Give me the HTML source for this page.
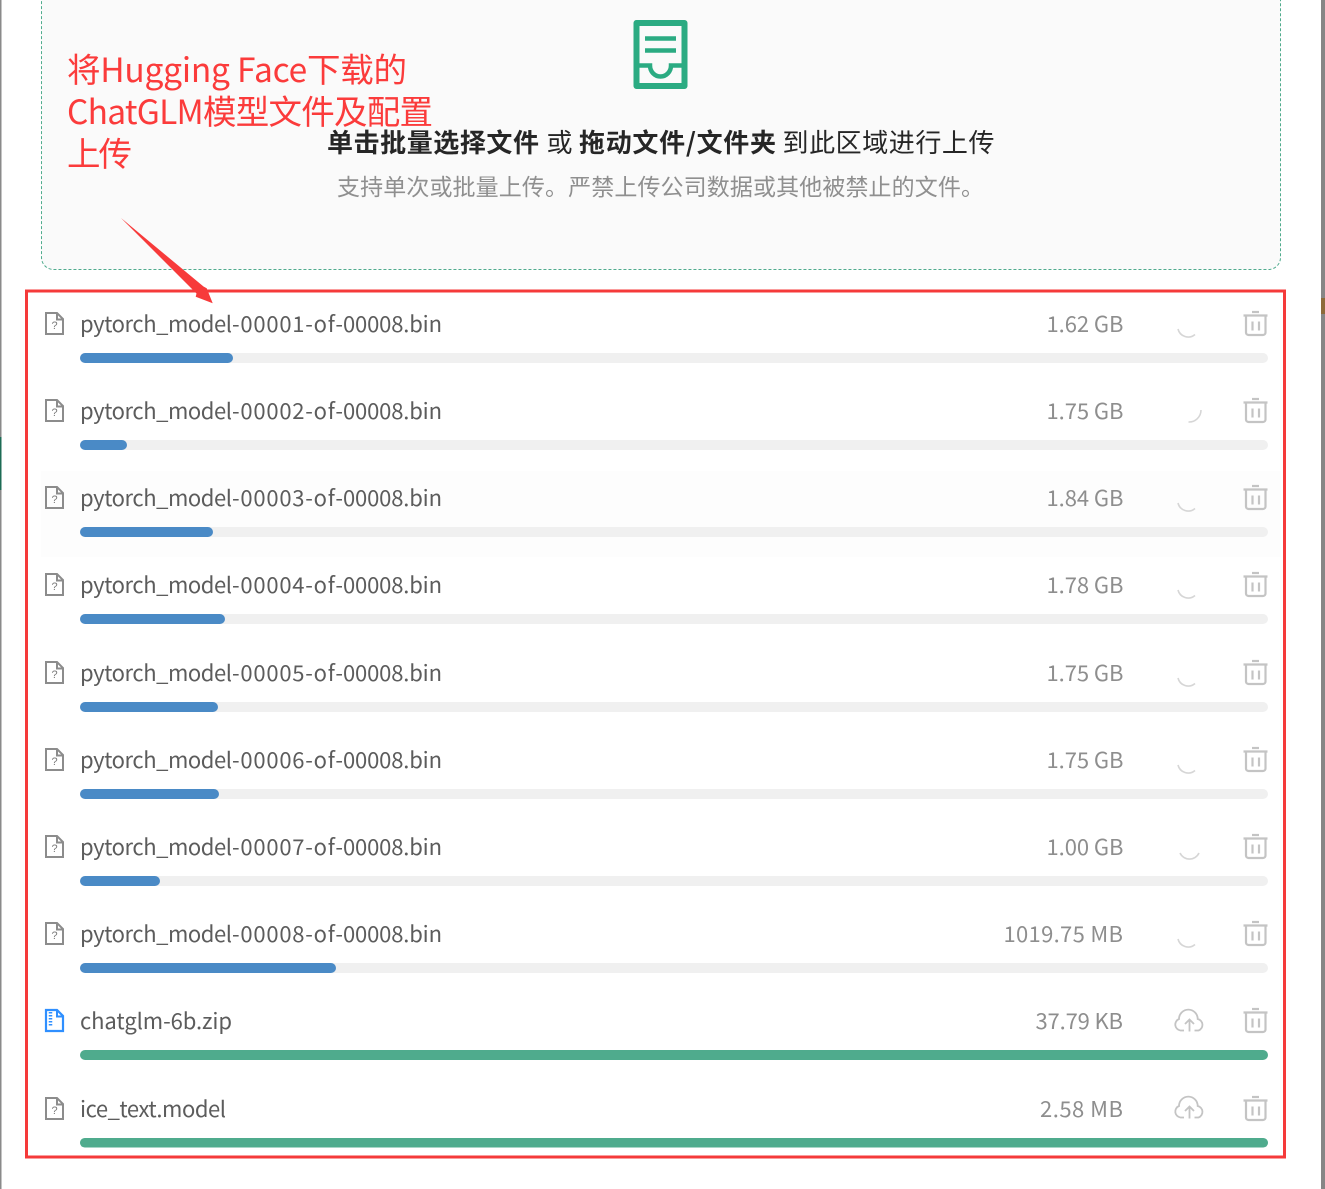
<!DOCTYPE html>
<html><head><meta charset="utf-8"><style>
html,body{margin:0;padding:0;background:#fff;width:1325px;height:1189px;overflow:hidden}
svg{display:block;position:absolute;left:0;top:0}
text{font-family:"Noto Sans CJK SC","Liberation Sans",sans-serif}
.n{font-size:22px;fill:#5c5c5c}
.s{font-size:22px;fill:#8e8e8e}
.a{font-size:33.5px;fill:#fb3b3b}
.t{font-size:26px;fill:#262626}
.b{font-weight:700}
.h{font-size:23px;fill:#8f8f8f}
.q{font-family:"Liberation Sans",sans-serif;font-size:11px;fill:#7a7a7a;text-anchor:middle}
</style></head><body>
<svg width="1325" height="1189" viewBox="0 0 1325 1189" xmlns="http://www.w3.org/2000/svg">
<defs>
<g id="f" fill="none" stroke="#8c8c8c" stroke-width="2"><path d="M46 313h11l6 6v15h-17z"/><path d="M57 313v6.500h6"/></g>
<g id="tr" fill="none" stroke="#c4c4c4" stroke-width="2.200"><path d="M1243.500 315.500h24"/><path d="M1252 312h7"/><path d="M1246 316v16.500a2.500 2.500 0 0 0 2.500 2.500h14.500a2.500 2.500 0 0 0 2.500-2.500v-16.500"/><path d="M1252.500 321.500v9M1259 321.500v9"/></g>
<g id="c" fill="none" stroke="#c4c4c4" stroke-width="1.800"><path d="M1184 1030.500h-3.500a6 6 0 0 1-1.500-11.500A9.100 9.100 0 0 1 1197.700 1019a6 6 0 0 1 .8 11.500h-4"/><path d="M1189.500 1031.500v-12M1185 1024l4.500-4.500 4.500 4.500"/></g>
<path id="sp" d="M1178 329a10.500 10.500 0 0 0 17 5.500" fill="none" stroke="#d6d6d6" stroke-width="1.600"/>
</defs>

<rect x="0" y="0" width="1.500" height="1189" fill="#8a8a8a"/>
<rect x="0" y="437" width="1.500" height="53" fill="#1d6b55"/>
<rect x="1321" y="0" width="4" height="1189" fill="#868686"/>
<rect x="1321" y="298" width="4" height="16" fill="#8d6a3a"/>

<rect x="41.500" y="-20" width="1239" height="289.500" rx="12" fill="#fafafa" stroke="#4fab8d" stroke-width="1" stroke-dasharray="3 2"/>

<g fill="none" stroke="#2bab82">
<path d="M636.500 23h48v63h-48z" stroke-width="6" stroke-linejoin="round"/>
<path d="M645 38.500h31M645 50.500h31" stroke-width="4.500"/>
<path d="M637 65.500h13a10.500 11 0 0 0 21 0h13" stroke-width="4.500"/>
</g>

<text class="t" y="152"><tspan class="b" x="327" textLength="212" lengthAdjust="spacing">单击批量选择文件</tspan><tspan x="546.500" textLength="26" lengthAdjust="spacing">或</tspan><tspan class="b" x="579" textLength="197" lengthAdjust="spacing">拖动文件/文件夹</tspan><tspan x="782.500" textLength="212" lengthAdjust="spacing">到此区域进行上传</tspan></text>
<text class="h" x="337" y="195" textLength="647" lengthAdjust="spacing">支持单次或批量上传。严禁上传公司数据或其他被禁止的文件。</text>

<rect x="41" y="471" width="1240" height="86" fill="#fdfdfd"/>

<g>
<rect x="80" y="353" width="1188" height="10" rx="5" fill="#f0f0f0"/><rect x="80" y="353" width="153" height="10" rx="5" fill="#4a8ac6"/>
<rect x="80" y="440" width="1188" height="10" rx="5" fill="#f0f0f0"/><rect x="80" y="440" width="47" height="10" rx="5" fill="#4a8ac6"/>
<rect x="80" y="527" width="1188" height="10" rx="5" fill="#f0f0f0"/><rect x="80" y="527" width="133" height="10" rx="5" fill="#4a8ac6"/>
<rect x="80" y="614" width="1188" height="10" rx="5" fill="#f0f0f0"/><rect x="80" y="614" width="145" height="10" rx="5" fill="#4a8ac6"/>
<rect x="80" y="702" width="1188" height="10" rx="5" fill="#f0f0f0"/><rect x="80" y="702" width="138" height="10" rx="5" fill="#4a8ac6"/>
<rect x="80" y="789" width="1188" height="10" rx="5" fill="#f0f0f0"/><rect x="80" y="789" width="139" height="10" rx="5" fill="#4a8ac6"/>
<rect x="80" y="876" width="1188" height="10" rx="5" fill="#f0f0f0"/><rect x="80" y="876" width="80" height="10" rx="5" fill="#4a8ac6"/>
<rect x="80" y="963" width="1188" height="10" rx="5" fill="#f0f0f0"/><rect x="80" y="963" width="256" height="10" rx="5" fill="#4a8ac6"/>
<rect x="80" y="1050" width="1188" height="10" rx="5" fill="#4fab8d"/>
<rect x="80" y="1138" width="1188" height="9.500" rx="4.700" fill="#4fab8d"/>
</g>

<g>
<text class="n" y="332"><tspan x="80" textLength="152" lengthAdjust="spacing">pytorch_model</tspan><tspan x="232" textLength="111" lengthAdjust="spacing">-00001-of-</tspan><tspan x="343" textLength="99" lengthAdjust="spacing">00008.bin</tspan></text>
<text class="n" y="419"><tspan x="80" textLength="152" lengthAdjust="spacing">pytorch_model</tspan><tspan x="232" textLength="111" lengthAdjust="spacing">-00002-of-</tspan><tspan x="343" textLength="99" lengthAdjust="spacing">00008.bin</tspan></text>
<text class="n" y="506"><tspan x="80" textLength="152" lengthAdjust="spacing">pytorch_model</tspan><tspan x="232" textLength="111" lengthAdjust="spacing">-00003-of-</tspan><tspan x="343" textLength="99" lengthAdjust="spacing">00008.bin</tspan></text>
<text class="n" y="593"><tspan x="80" textLength="152" lengthAdjust="spacing">pytorch_model</tspan><tspan x="232" textLength="111" lengthAdjust="spacing">-00004-of-</tspan><tspan x="343" textLength="99" lengthAdjust="spacing">00008.bin</tspan></text>
<text class="n" y="681"><tspan x="80" textLength="152" lengthAdjust="spacing">pytorch_model</tspan><tspan x="232" textLength="111" lengthAdjust="spacing">-00005-of-</tspan><tspan x="343" textLength="99" lengthAdjust="spacing">00008.bin</tspan></text>
<text class="n" y="768"><tspan x="80" textLength="152" lengthAdjust="spacing">pytorch_model</tspan><tspan x="232" textLength="111" lengthAdjust="spacing">-00006-of-</tspan><tspan x="343" textLength="99" lengthAdjust="spacing">00008.bin</tspan></text>
<text class="n" y="855"><tspan x="80" textLength="152" lengthAdjust="spacing">pytorch_model</tspan><tspan x="232" textLength="111" lengthAdjust="spacing">-00007-of-</tspan><tspan x="343" textLength="99" lengthAdjust="spacing">00008.bin</tspan></text>
<text class="n" y="942"><tspan x="80" textLength="152" lengthAdjust="spacing">pytorch_model</tspan><tspan x="232" textLength="111" lengthAdjust="spacing">-00008-of-</tspan><tspan x="343" textLength="99" lengthAdjust="spacing">00008.bin</tspan></text>
<text class="n" x="80" y="1029" textLength="152" lengthAdjust="spacing">chatglm-6b.zip</text>
<text class="n" x="80" y="1117" textLength="146" lengthAdjust="spacing">ice_text.model</text>
</g>

<g>
<text class="s" x="1046.500" y="332" textLength="77" lengthAdjust="spacing">1.62 GB</text>
<text class="s" x="1046.500" y="419" textLength="77" lengthAdjust="spacing">1.75 GB</text>
<text class="s" x="1046.500" y="506" textLength="77" lengthAdjust="spacing">1.84 GB</text>
<text class="s" x="1046.500" y="593" textLength="77" lengthAdjust="spacing">1.78 GB</text>
<text class="s" x="1046.500" y="681" textLength="77" lengthAdjust="spacing">1.75 GB</text>
<text class="s" x="1046.500" y="768" textLength="77" lengthAdjust="spacing">1.75 GB</text>
<text class="s" x="1046.500" y="855" textLength="77" lengthAdjust="spacing">1.00 GB</text>
<text class="s" x="1003.500" y="942" textLength="119.500" lengthAdjust="spacing">1019.75 MB</text>
<text class="s" x="1035.500" y="1029" textLength="87.500" lengthAdjust="spacing">37.79 KB</text>
<text class="s" x="1040" y="1117" textLength="83" lengthAdjust="spacing">2.58 MB</text>
</g>

<use href="#f"/><use href="#f" y="87"/><use href="#f" y="174"/><use href="#f" y="261"/><use href="#f" y="349"/><use href="#f" y="436"/><use href="#f" y="523"/><use href="#f" y="610"/><use href="#f" y="785"/>
<g>
<text class="q" x="54.500" y="329">?</text><text class="q" x="54.500" y="416">?</text><text class="q" x="54.500" y="503">?</text><text class="q" x="54.500" y="590">?</text><text class="q" x="54.500" y="678">?</text><text class="q" x="54.500" y="765">?</text><text class="q" x="54.500" y="852">?</text><text class="q" x="54.500" y="939">?</text><text class="q" x="54.500" y="1114">?</text>
</g>
<g transform="translate(0 697)" fill="none" stroke="#2f8fff" stroke-width="2.200"><path d="M46 313h11l6 6v15h-17z"/><path d="M57 313v6.500h6" stroke-width="2"/><path d="M50.500 315v14" stroke-width="3.500" stroke-dasharray="1.500 1.500"/></g>

<use href="#tr"/><use href="#tr" y="87"/><use href="#tr" y="174"/><use href="#tr" y="261"/><use href="#tr" y="349"/><use href="#tr" y="436"/><use href="#tr" y="523"/><use href="#tr" y="610"/><use href="#tr" y="697"/><use href="#tr" y="785"/>

<use href="#sp"/>
<path d="M1201 410a12 12 0 0 1-12.500 12" fill="none" stroke="#d6d6d6" stroke-width="1.600"/>
<use href="#sp" y="174"/><use href="#sp" y="261"/><use href="#sp" y="349"/><use href="#sp" y="436"/>
<path d="M1180 853a10.500 10.500 0 0 0 19 0" fill="none" stroke="#d6d6d6" stroke-width="1.600"/>
<use href="#sp" y="610"/>
<use href="#c"/><use href="#c" y="87"/>

<rect x="26.500" y="291" width="1258" height="866" fill="none" stroke="#f53a3a" stroke-width="3"/>

<path d="M121 218L203.500 286.500L206.700 288.300L212.700 303.300L195.700 296.700L196.500 293.500Z" fill="#f73a3a"/>

<text class="a"><tspan x="67" y="82" textLength="340" lengthAdjust="spacing">将Hugging Face下载的</tspan><tspan x="67" y="124" textLength="366" lengthAdjust="spacing">ChatGLM模型文件及配置</tspan><tspan x="67" y="166" textLength="65" lengthAdjust="spacing">上传</tspan></text>
</svg>
</body></html>
